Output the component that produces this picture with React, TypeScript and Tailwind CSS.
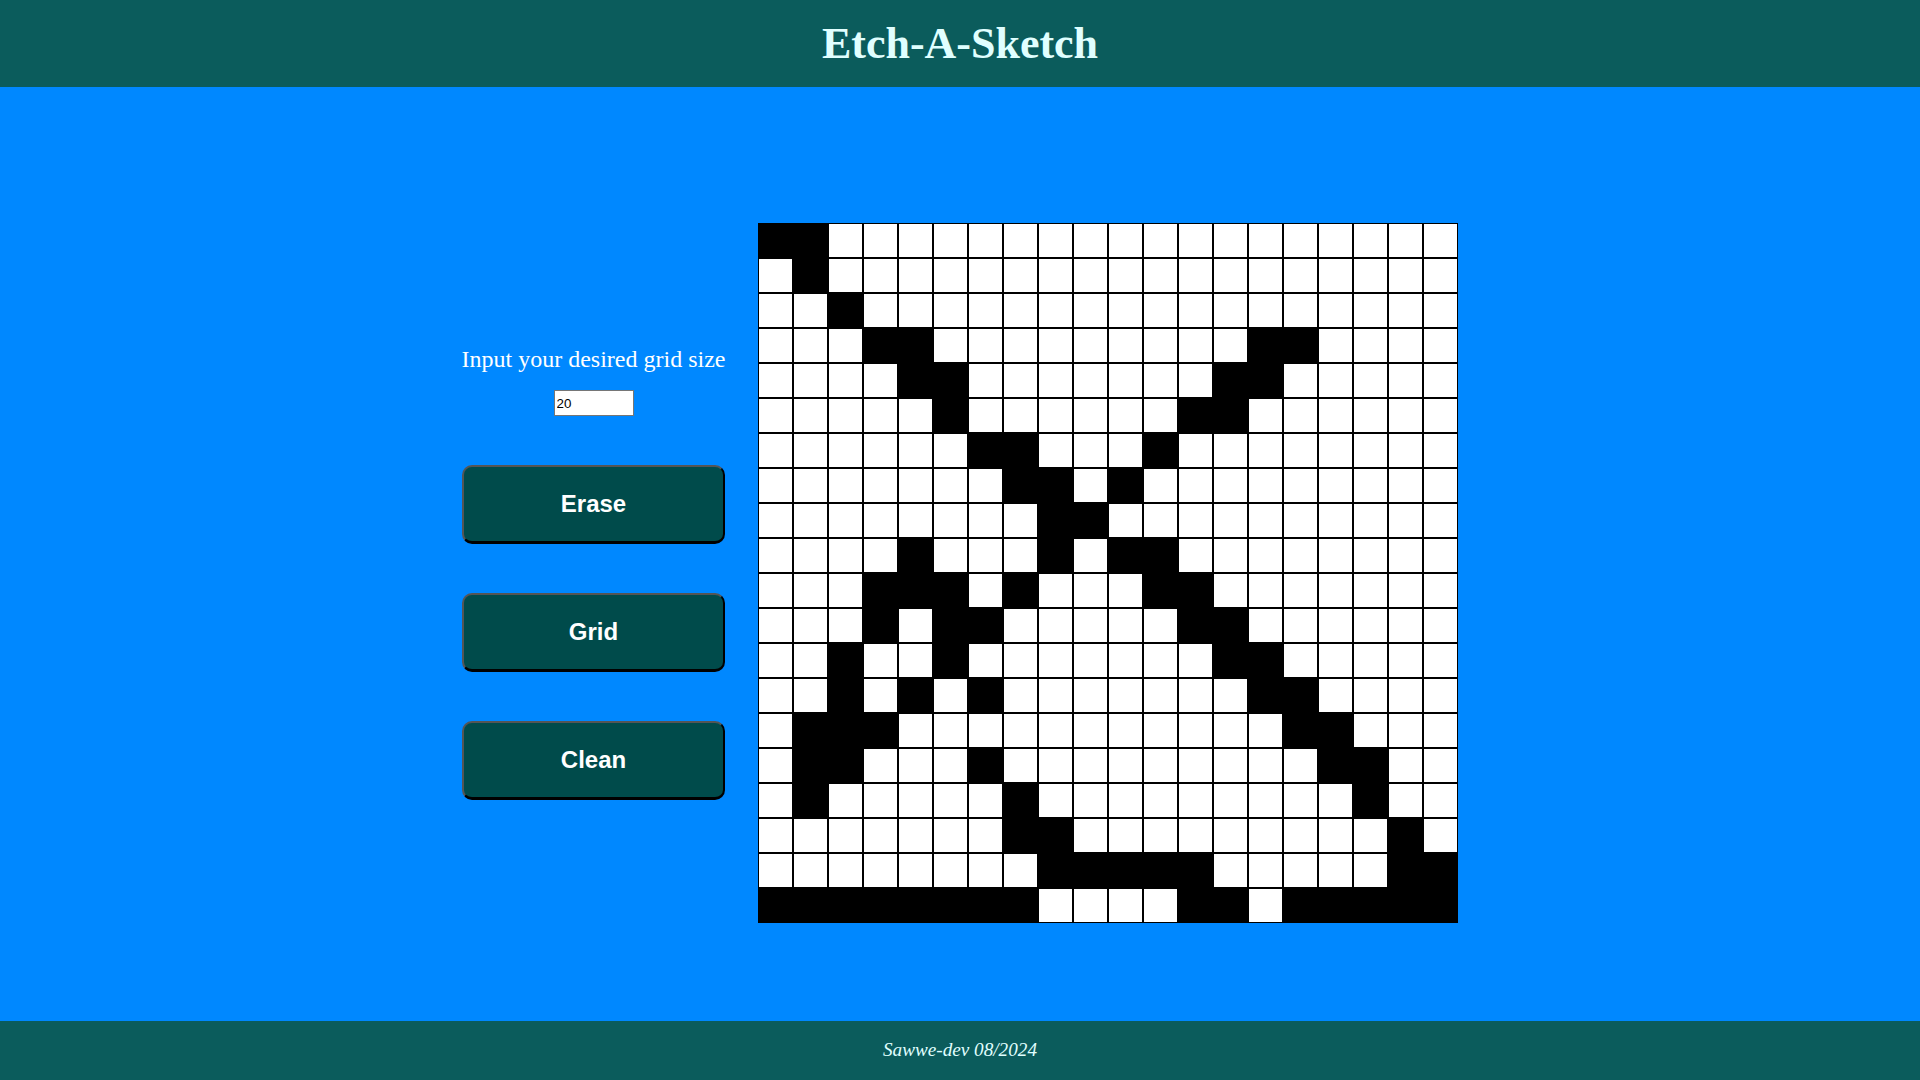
import React from "react";

const ROWS = [
  "XX..................",
  ".X..................",
  "..X.................",
  "...XX.........XX....",
  "....XX.......XX.....",
  ".....X......XX......",
  "......XX...X........",
  ".......XX.X.........",
  "........XX..........",
  "....X...X.XX........",
  "...XXX.X...XX.......",
  "...X.XX.....XX......",
  "..X..X.......XX.....",
  "..X.X.X.......XX....",
  ".XXX...........XX...",
  ".XX...X.........XX..",
  ".X.....X.........X..",
  ".......XX.........X.",
  "........XXXXX.....XX",
  "XXXXXXXX....XX.XXXXX",
];

function Btn({ label }: { label: string }) {
  return (
    <button className="w-[263px] h-[79px] rounded-[10px] bg-[#004b4b] border-2 border-[#555555] border-b-[3px] border-b-black border-r-black text-white text-[24px] font-bold font-['Liberation_Sans',Arial,sans-serif]">
      {label}
    </button>
  );
}

export default function App() {
  return (
    <div className="h-screen w-full flex flex-col bg-[#0088ff] font-['Liberation_Serif','Times_New_Roman',serif]">
      <header className="h-[87px] shrink-0 bg-[#0b5c5c] flex items-center justify-center">
        <h1 className="text-[44px] font-bold text-[#e0ffff] leading-none">Etch-A-Sketch</h1>
      </header>
      <main className="flex-1 flex justify-center items-start pt-[136px]">
        <div className="flex items-center gap-[33px]">
          <div className="flex flex-col items-center w-[263px]">
            <p className="text-[24px] text-white leading-[normal] whitespace-nowrap">Input your desired grid size</p>
            <input
              type="text"
              defaultValue="20"
              className="mt-[17px] w-[80px] h-[26px] border border-[#767676] bg-white text-black px-[2px] text-[13.33px] font-['Liberation_Sans',Arial,sans-serif] outline-none"
            />
            <div className="mt-[49px] flex flex-col gap-[49px]">
              <Btn label="Erase" />
              <Btn label="Grid" />
              <Btn label="Clean" />
            </div>
          </div>
          <div className="grid grid-cols-[repeat(20,35px)] grid-rows-[repeat(20,35px)] w-[700px] h-[700px]">
            {ROWS.flatMap((row, r) =>
              row.split("").map((c, i) => (
                <div
                  key={`${r}-${i}`}
                  className={c === "X" ? "border border-black bg-black" : "border border-black bg-white"}
                />
              ))
            )}
          </div>
        </div>
      </main>
      <footer className="h-[59px] shrink-0 bg-[#0b5c5c] flex items-center justify-center">
        <p className="italic text-[19.2px] text-[#e0ffff]">Sawwe-dev 08/2024</p>
      </footer>
    </div>
  );
}
